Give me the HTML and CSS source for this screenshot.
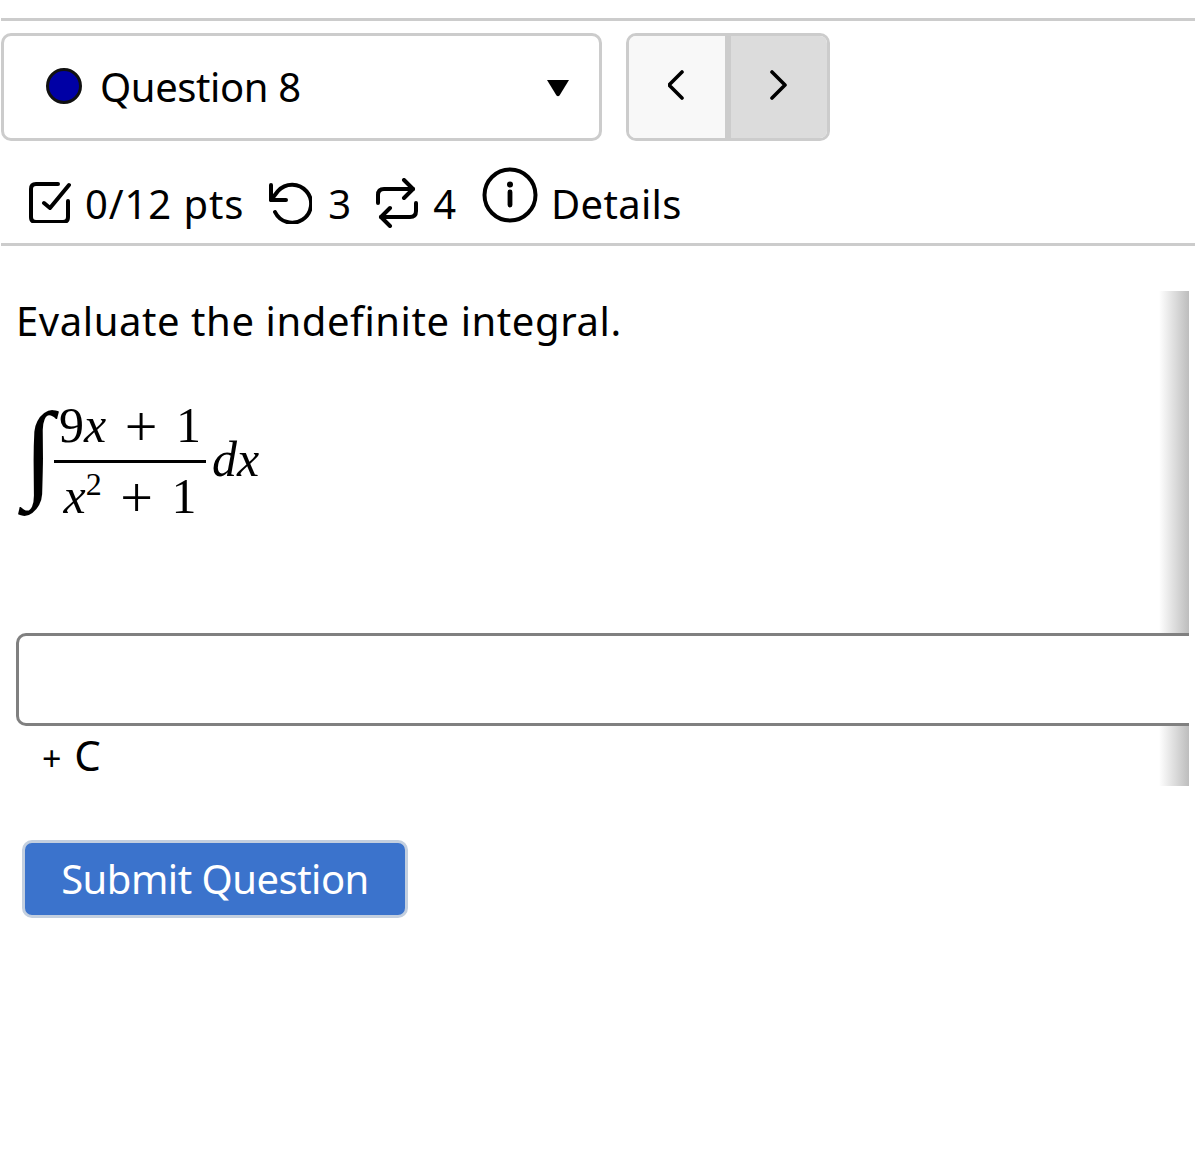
FILE: index.html
```
<!DOCTYPE html>
<html lang="en">
<head>
<meta charset="utf-8">
<title>Question 8</title>
<link rel="stylesheet" href="styles.css">
</head>
<body>
<div class="page">
  <div class="top-rule"></div>
  <div class="nav-row">
    <div class="select">
      <span class="dot"></span>
      <span class="select-label">Question 8</span>
      <svg class="caret" width="24" height="18" viewBox="0 0 24 18"><path d="M1 1h22L13.500 16.500q-1.500 1.500-3 0z" fill="#000"/></svg>
    </div>
    <div class="pager">
      <div class="page-btn prev"><svg width="18" height="30" viewBox="0 0 18 30"><path d="M14 2 1 15l13 13" fill="none" stroke="#000" stroke-width="3.6" stroke-linecap="round" stroke-linejoin="round"/></svg></div>
      <div class="page-btn next"><svg width="18" height="30" viewBox="0 0 18 30"><path d="M2 2l13 13L2 28" fill="none" stroke="#000" stroke-width="3.6" stroke-linecap="round" stroke-linejoin="round"/></svg></div>
    </div>
  </div>
  <div class="meta-row">
    <svg class="ic-check" width="42" height="42" viewBox="0 0 42 42"><path d="M40 4 21 27l-6-5" fill="none" stroke="#000" stroke-width="4" stroke-linecap="round" stroke-linejoin="round"/><path d="M29 3H7Q2 3 2 8v28q0 5 5 5h27q5 0 5-5V20" fill="none" stroke="#000" stroke-width="4" stroke-linecap="round" stroke-linejoin="round"/></svg>
    <span class="meta-text pts">0/12 pts</span>
    <svg class="ic-undo" width="46" height="42" viewBox="0 0 46 42"><path d="M5 3v15h15" fill="none" stroke="#000" stroke-width="4" stroke-linecap="round" stroke-linejoin="round"/><path d="M5 18 12 9A19 19 0 1 1 9 30" fill="none" stroke="#000" stroke-width="4" stroke-linecap="round" stroke-linejoin="round"/></svg>
    <span class="meta-text attempts">3</span>
    <svg class="ic-loop" width="44" height="50" viewBox="0 0 44 50"><path d="M29 2l9 9-9 9" fill="none" stroke="#000" stroke-width="4" stroke-linecap="round" stroke-linejoin="round"/><path d="M38 11H9q-6 0-6 6v8" fill="none" stroke="#000" stroke-width="4" stroke-linecap="round" stroke-linejoin="round"/><path d="M15 48l-9-9 9-9" fill="none" stroke="#000" stroke-width="4" stroke-linecap="round" stroke-linejoin="round"/><path d="M6 39h29q6 0 6-6v-8" fill="none" stroke="#000" stroke-width="4" stroke-linecap="round" stroke-linejoin="round"/></svg>
    <span class="meta-text tries">4</span>
    <svg class="ic-info" width="56" height="56" viewBox="0 0 56 56"><circle cx="28" cy="28" r="25.5" fill="none" stroke="#000" stroke-width="4"/><circle cx="28" cy="17.5" r="3" fill="#000"/><path d="M28 25v13" stroke="#000" stroke-width="4.800" stroke-linecap="round"/></svg>
    <span class="meta-text details">Details</span>
  </div>
  <div class="rule"></div>
  <div class="content">
    <div class="shadow"></div>
    <p class="prompt">Evaluate the indefinite integral.</p>
    <div class="math">
      <span class="integral">∫</span>
      <span class="frac">
        <span class="num">9<i>x</i> <span class="op">+</span> 1</span>
        <span class="den"><i>x</i><sup>2</sup> <span class="op">+</span> 1</span>
      </span>
      <span class="dx"><i>dx</i></span>
    </div>
    <div class="answer"></div>
    <div class="plus-c"><span class="plus">+</span> C</div>
  </div>
  <div class="submit">Submit Question</div>
</div>
</body>
</html>
```
FILE: styles.css
```
html, body { margin: 0; padding: 0; background: #fff; }
body { font-family: "Noto Sans", sans-serif; color: #000; }
.page { height: 1152px; padding-top: 18px; box-sizing: border-box; overflow: hidden; }
.top-rule { height: 3px; background: #ccc; margin-left: 1px; }
.nav-row { display: flex; margin: 12px 0 0 1px; gap: 24px; }
.select { width: 601px; height: 108px; box-sizing: border-box; border: 3px solid #ccc; border-radius: 10px; display: flex; align-items: center; padding-left: 42px; padding-right: 29px; }
.dot { width: 36px; height: 36px; box-sizing: border-box; border: 3px solid #111; border-radius: 50%; background: #0000a5; margin-top: -2px; }
.select-label { font-size: 40px; letter-spacing: -0.4px; margin: -2px 0 0 18px; flex: 1; }
.caret { margin-top: 2px; }
.pager { width: 204px; height: 108px; box-sizing: border-box; border: 3px solid #ccc; border-radius: 10px; display: flex; overflow: hidden; }
.page-btn { display: flex; align-items: center; justify-content: center; height: 100%; }
.page-btn svg { margin-top: -4px; }
.prev { width: 96px; background: #f8f8f8; }
.next { flex: 1; background: #dcdcdc; border-left: 6px solid #ccc; }
.meta-row { display: flex; align-items: center; height: 102px; margin-left: 29px; }
.meta-text { font-size: 40px; line-height: 50px; margin-top: 23px; }
.ic-check { margin-top: 20px; }
.pts { margin-left: 14px; letter-spacing: 0.9px; }
.ic-undo { margin-left: 22px; margin-top: 22px; }
.attempts { margin-left: 16px; }
.ic-loop { margin-left: 24px; margin-top: 22px; }
.tries { margin-left: 14px; }
.ic-info { margin-left: 26px; margin-top: 5px; }
.details { margin-left: 13px; letter-spacing: 0.3px; }
.rule { height: 3px; background: #ccc; margin-left: 1px; }
.content { position: relative; margin: 45px 6px 0 0; height: 495px; }
.shadow { position: absolute; top: 0; right: 0; bottom: 0; width: 30px; background: linear-gradient(to right, rgba(190,190,190,0), #bdbdbd); }
.prompt { margin: 0; padding: 0 0 0 16px; font-size: 40px; letter-spacing: 0.58px; line-height: 60px; }
.math { display: flex; align-items: center; margin: 44px 0 0 14px; height: 128px; font-family: "Liberation Serif", serif; font-size: 50px; }
.integral { font-size: 108px; line-height: 128px; width: 30px; padding-left: 10px; margin-bottom: 16px; font-family: "Liberation Serif", serif; }
.frac { display: flex; flex-direction: column; width: 152px; margin-top: 3px; align-items: center; text-align: center; white-space: nowrap; }
.num { line-height: 62px; border-bottom: 3px solid #000; width: 100%; height: 66px; }
.den { line-height: 66px; height: 64px; }
.den sup { font-size: 32px; line-height: 0; }
.op { margin: 0 6px; font-size: 58px; line-height: 0; vertical-align: -4px; }
.dx { margin-left: 6px; }
.answer { position: relative; margin: 110px 0 0 16px; height: 93px; box-sizing: border-box; background: #fff; border: 3px solid #808080; border-right: 0; border-radius: 10px 0 0 10px; }
.plus-c { padding-left: 42px; font-size: 42px; word-spacing: 2px; line-height: 58px; }
.plus { font-size: 34px; }
.submit { width: 386px; height: 78px; box-sizing: border-box; margin: 54px 0 0 22px; border: 3px solid #c3cfdf; border-radius: 10px; background: #3b73cc; color: #fff; font-size: 40px; letter-spacing: -0.5px; line-height: 71px; text-align: center; }
```
